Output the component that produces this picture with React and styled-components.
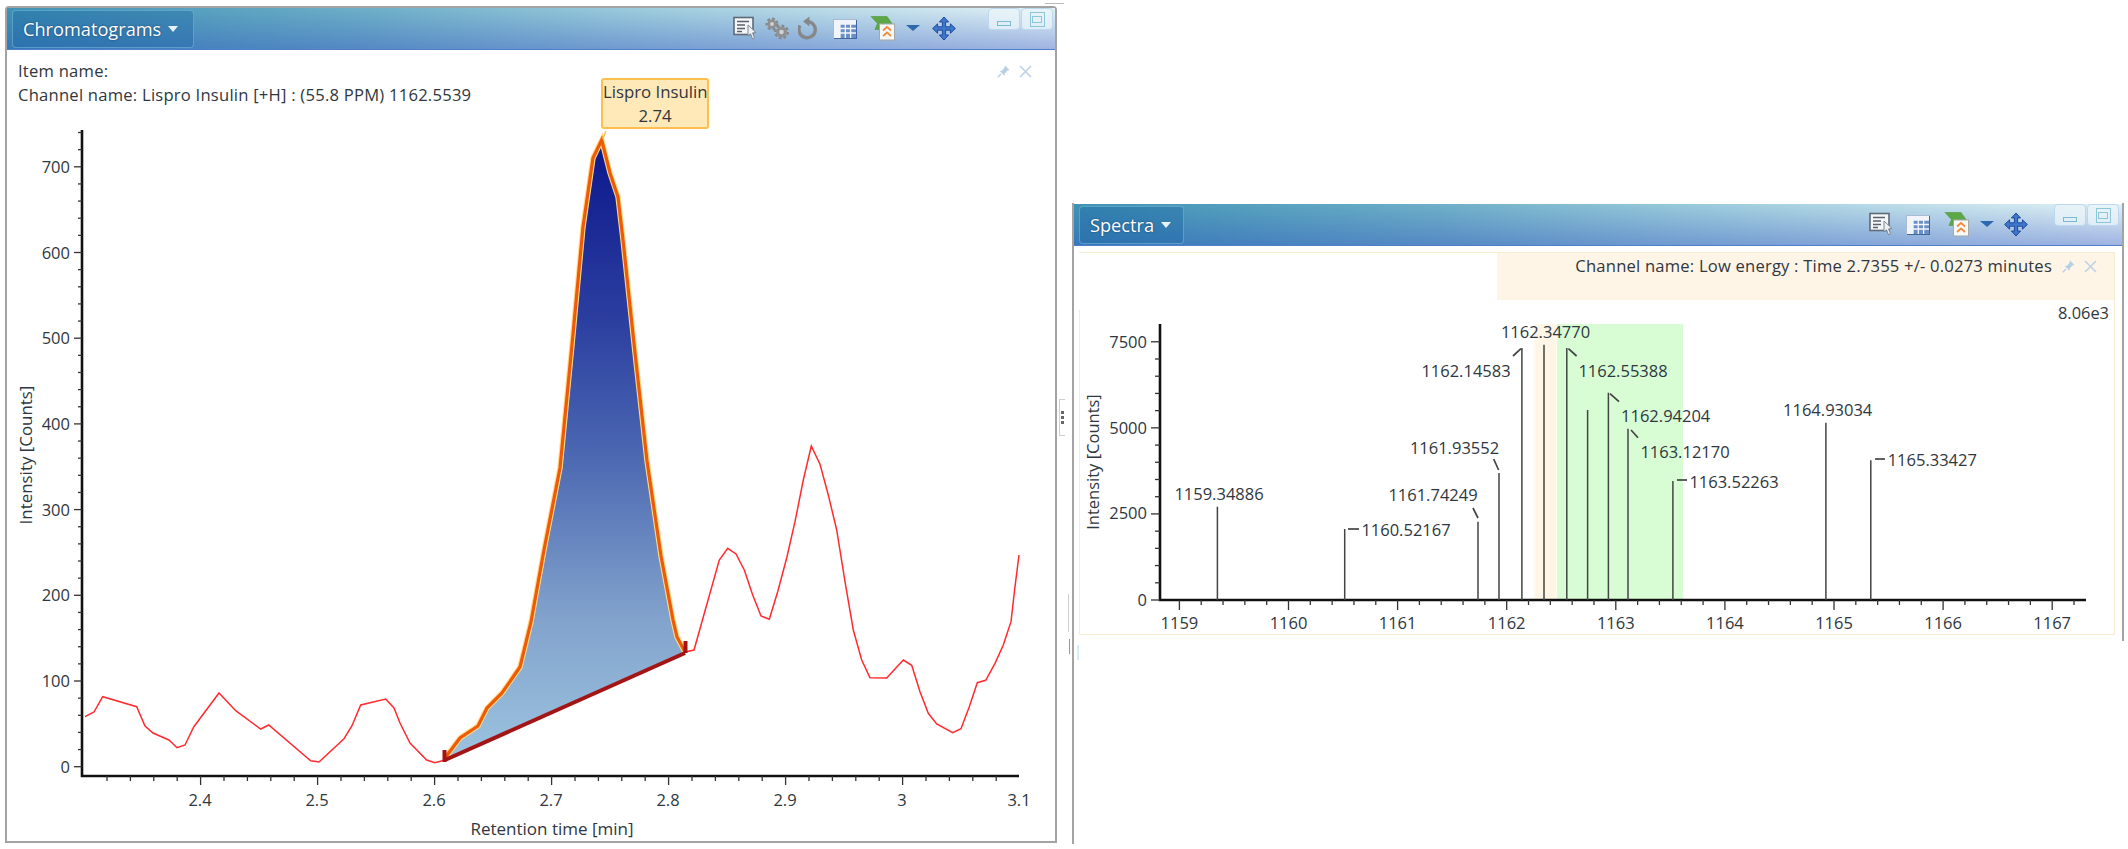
import React from "react";
import styled, { createGlobalStyle } from "styled-components";

const Global = createGlobalStyle`
  html, body { margin: 0; padding: 0; background: #fff; }
  body { font-family: "Open Sans", "Noto Sans", sans-serif; color: #2f3740; }
`;

const Desktop = styled.div`
  display: flex;
  align-items: flex-start;
  width: 2128px;
  height: 849px;
  padding: 6px 0 0 5px;
  box-sizing: border-box;
  overflow: hidden;
  background: #fff;
`;

const ChromWindow = styled.section`
  flex: none;
  width: 1052px;
  height: 837px;
  box-sizing: border-box;
  border: 2px solid #a3a3a3;
  border-radius: 4px 4px 0 0;
  display: flex;
  flex-direction: column;
`;

const Gutter = styled.div`
  flex: none;
  width: 15px;
  height: 843px;
  display: flex;
  flex-direction: column;
  align-items: flex-start;
`;

const TopRule = styled.div`
  width: 19px;
  height: 1px;
  margin: -3px 0 0 -12px;
  background: #bbb;
`;

const Handle = styled.div`
  margin: 395px 0 0 2px;
  width: 6px;
  height: 37px;
  box-sizing: border-box;
  border: 1px solid #cfcfcf;
  border-right: 0;
  display: flex;
  flex-direction: column;
  align-items: center;
  justify-content: center;
  gap: 2px;
  i { width: 3px; height: 3px; background: #666; display: block; }
`;

const SecondHandle = styled.div`
  margin: 158px 0 0 10px;
  width: 2px;
  height: 38px;
  box-sizing: border-box;
  border-right: 1px solid #cfcfcf;
`;

const GutterStub = styled.div`
  margin: 7px 0 0 12px;
  width: 1px;
  height: 15px;
  background: #999;
`;

const SpectraColumn = styled.div`
  flex: none;
  margin-top: 197px;
  width: 1052px;
  height: 641px;
  box-sizing: border-box;
  border-left: 2px solid #a3a3a3;
  display: flex;
  flex-direction: column;
  align-items: flex-start;
`;

const SpectraPane = styled.section`
  width: 1050px;
  height: 438px;
  box-sizing: border-box;
  padding-top: 1px;
  border-right: 2px solid #a3a3a3;
  display: flex;
  flex-direction: column;
`;

const PaneStub = styled.div`
  margin: 4px 0 0 3px;
  width: 2px;
  height: 15px;
  background: #d6ecfa;
`;

const Header = styled.header`
  flex: none;
  height: 42px;
  box-sizing: border-box;
  display: flex;
  align-items: center;
  border-bottom: 1px solid #4f7fca;
  background:
    linear-gradient(180deg, rgba(255,255,255,0) 0%, rgba(40,70,190,.36) 100%),
    linear-gradient(90deg, #3f94b4 0%, #6fb0c8 35%, #9cccdc 60%, #e2f2f6 100%);
`;

const TitleButton = styled.div`
  flex: none;
  width: ${(p) => p.$w}px;
  height: 38px;
  margin-left: ${(p) => p.$left}px;
  box-sizing: border-box;
  display: flex;
  align-items: center;
  gap: 7px;
  padding-left: 10px;
  border: 1px solid rgba(125,190,220,.55);
  border-radius: 4px;
  background: rgba(30,105,165,.42);
  color: #fff;
  font-size: 18.2px;
  text-shadow: 0 0 2px rgba(0,30,70,.6);
`;

const Caret = styled.span`
  width: 0;
  height: 0;
  border-left: ${(p) => p.$half || 5}px solid transparent;
  border-right: ${(p) => p.$half || 5}px solid transparent;
  border-top: 6px solid ${(p) => p.$color || "#e8f2fa"};
`;

const Toolbar = styled.div`
  margin-left: auto;
  display: flex;
  align-items: center;
  height: 100%;
`;

const Tool = styled.span`
  display: flex;
  flex: none;
  margin-left: ${(p) => p.$gap || 0}px;
  margin-top: ${(p) => p.$dy || 0}px;
`;

const WinButtons = styled.div`
  display: flex;
  align-self: flex-start;
  gap: 1px;
  margin-left: ${(p) => p.$gap}px;
  margin-right: ${(p) => p.$right}px;
`;

const WinButton = styled.button`
  width: 32px;
  height: 22px;
  padding: 0;
  box-sizing: border-box;
  border: 1.5px solid #bcd8ef;
  border-radius: 4px;
  background: rgba(236,246,250,.75);
  display: flex;
  align-items: center;
  justify-content: center;
`;

const MinGlyph = styled.span`
  width: 14px;
  height: 5px;
  margin-top: 9px;
  box-sizing: border-box;
  border: 1.5px solid #79bcd2;
`;

const MaxGlyph = styled.span`
  width: 15px;
  height: 15px;
  box-sizing: border-box;
  border: 1.5px solid #8cc6d8;
  display: flex;
  align-items: center;
  justify-content: center;
  &::after {
    content: "";
    width: 8px;
    height: 5px;
    border: 1.5px solid #8cc6d8;
  }
`;

const ChromBody = styled.div`
  flex: 1;
  position: relative;
  display: flex;
  flex-direction: column;
`;

const InfoBar = styled.div`
  flex: none;
  height: 58px;
  box-sizing: border-box;
  padding: 9px 23px 0 11px;
  display: flex;
  justify-content: space-between;
  align-items: flex-start;
`;

const InfoText = styled.div`
  font-size: 16.6px;
  line-height: 24px;
  letter-spacing: 0.23px;
  white-space: nowrap;
`;

const PinGroup = styled.div`
  flex: none;
  display: flex;
  align-items: center;
  gap: 9px;
  height: 24px;
`;

const Callout = styled.div`
  position: absolute;
  left: 594px;
  top: 28px;
  width: 108px;
  height: 51px;
  box-sizing: border-box;
  border: 2px solid #fdc04e;
  border-radius: 3px;
  background: #ffe9b9;
  font-size: 16.8px;
  line-height: 24px;
  text-align: center;
  white-space: nowrap;
`;

const PlotSvg = styled.svg`
  display: block;
  flex: none;
  overflow: visible;
  font-family: "Open Sans", "Noto Sans", sans-serif;
  font-size: 16.5px;
  fill: #2f3740;
`;

const SpectraFrame = styled.div`
  flex: none;
  height: 383px;
  margin: 6px 6px 0 5px;
  width: 1036px;
  box-sizing: border-box;
  border: solid #f6ecd0;
  border-width: 1px 1px 1px 0;
  display: flex;
  flex-direction: column;
`;

const InfoStrip = styled.div`
  flex: none;
  height: 47px;
  width: 617px;
  margin-left: auto;
  box-sizing: border-box;
  background: #fef5e7;
  display: flex;
  align-items: flex-start;
  justify-content: flex-end;
  padding: 1px 17px 0 0;
  font-size: 16.6px;
  line-height: 24px;
  letter-spacing: 0.2px;
  white-space: nowrap;
`;

const StripLabel = styled.span`
  margin-right: 10px;
`;

const PlotPanel = styled.div`
  flex: 1;
  background: linear-gradient(#f6ecd0, #f6ecd0) left 10px / 1px 100% no-repeat;
  display: flex;
  flex-direction: column;
`;

const ScaleRow = styled.div`
  flex: none;
  height: 24px;
  text-align: right;
  padding-right: 5px;
  font-size: 16.4px;
  line-height: 26px;
`;

/* ---- icons ---- */
const ReportIcon = () => (
  <svg width="25" height="25" viewBox="0 0 25 25">
    <rect x="1" y="1.5" width="19" height="17" fill="#f4f6f8" stroke="#5f6a78" strokeWidth="1.6" />
    <path d="M4 5.5h12M4 9h8M4 12.5h8M4 15.5h5" stroke="#59636f" strokeWidth="1.4" />
    <path d="M15 9l8 7.5-3.4.4 1.9 5-2 .9-2-5-2.5 2.2z" fill="#eef1f4" stroke="#7f8892" strokeWidth="1" />
  </svg>
);

const GearShape = ({ cx, cy, r }) => (
  <g>
    <circle cx={cx} cy={cy} r={r} fill="none" stroke="#88898b" strokeWidth="3" strokeDasharray="2.6 2" />
    <circle cx={cx} cy={cy} r={r - 0.5} fill="#8f9092" />
    <circle cx={cx} cy={cy} r={r * 0.38} fill="#cfd2d6" />
  </g>
);

const GearsIcon = () => (
  <svg width="24" height="23" viewBox="0 0 24 23">
    <GearShape cx={7} cy={7} r={5} />
    <GearShape cx={16.5} cy={15} r={6} />
  </svg>
);

const RefreshIcon = () => (
  <svg width="23" height="25" viewBox="0 0 23 25">
    <path d="M8 5.5a8.2 8.2 0 1 1-6 4" fill="none" stroke="#85888b" strokeWidth="3.4" />
    <path d="M11.5 0.5v10L5 5.5z" fill="#85888b" />
  </svg>
);

const TableIcon = () => (
  <svg width="24" height="20" viewBox="0 0 24 20">
    <rect x="0.5" y="0.5" width="23" height="19" fill="#f1f5fb" stroke="#a9bbd4" />
    <rect x="7" y="5" width="16" height="14" fill="#6a8fc6" />
    <path d="M1 5h22M1 9.5h22M1 14h22M7 5v14M12.3 5v14M17.6 5v14" stroke="#f2f6fb" strokeWidth="1.3" />
    <path d="M1 19.5h23M23.5 1v19" stroke="#41659e" />
  </svg>
);

const ExportIcon = () => (
  <svg width="26" height="25" viewBox="0 0 26 25">
    <path d="M1 0.5h16l5 7H9v6H5L7.5 7.5z" fill="#5da846" stroke="#4e9a3c" strokeWidth=".6" />
    <rect x="9.5" y="8" width="15" height="16" fill="#f8f8f6" stroke="#a5a8a6" />
    <path d="M13 14.5l4-3.5 4 3.5M13 20l4-3.5 4 3.5" fill="none" stroke="#f4893a" strokeWidth="1.7" />
  </svg>
);

const MoveIcon = () => (
  <svg width="24" height="25" viewBox="0 0 24 25">
    <path d="M12 1l4.6 5h-3v4.8h4.8v-3L23.4 12.5l-5 4.7v-3h-4.8v4.8h3L12 24l-4.6-5h3v-4.8H5.6v3L.6 12.5l5-4.7v3h4.8V6h-3z"
      fill="#3f77c8" stroke="#1d4aa0" strokeWidth="1" />
  </svg>
);

const PinIcon = () => (
  <svg width="13" height="13" viewBox="0 0 13 13">
    <path d="M8 .5l4.5 4.5-2 .6-2.8 2.8-.2 2.4L2.6 6l2.4-.2 2.4-3z" fill="#b6cfe6" />
    <path d="M4 9L.8 12.2" stroke="#b6cfe6" strokeWidth="1.3" />
  </svg>
);

const CloseIcon = () => (
  <svg width="13" height="13" viewBox="0 0 13 13">
    <path d="M1 1l11 11M12 1L1 12" stroke="#bcd2e6" strokeWidth="1.6" />
  </svg>
);

const Tools = ({ long }) => (
  <Toolbar>
    <Tool><ReportIcon /></Tool>
    {long && <Tool $gap={7}><GearsIcon /></Tool>}
    {long && <Tool $gap={9}><RefreshIcon /></Tool>}
    <Tool $gap={12}><TableIcon /></Tool>
    <Tool $gap={long ? 13 : 14}><ExportIcon /></Tool>
    <Tool $gap={10} $dy={-2}><Caret $half={7} $color="#2f69ad" /></Tool>
    <Tool $gap={long ? 12 : 10}><MoveIcon /></Tool>
    <WinButtons $gap={long ? 32 : 26} $right={long ? 2 : 3}>
      <WinButton aria-label="minimize"><MinGlyph /></WinButton>
      <WinButton aria-label="maximize"><MaxGlyph /></WinButton>
    </WinButtons>
  </Toolbar>
);

/* ---- chromatogram ---- */
const redA = [[85,716.7],[94,712],[102.7,696.7],[136.7,706.7],[145,726],[153,733],[169,740],[177,747.7],[185,745],[193.7,727],[219,693],[235.7,710.7],[260.7,729],[268.7,725],[310.7,760.7],[319,762],[344,738.7],[352,725.7],[360.7,705],[385.7,699],[394,708],[400,723],[410,743],[426.7,760],[435,762.7],[445,760]];
const redB = [[685,652],[694,650],[719.3,560],[727.7,548.3],[736,554],[744.3,570],[752.7,595],[761,616],[769.3,619.3],[777.7,591.7],[786.7,558],[795,521.7],[803.3,480],[811.3,446],[820,464.3],[828.3,495],[836.7,530],[845,581.7],[853.3,630],[861.7,660],[870,677.7],[886.7,678],[903.3,660],[911.7,665.3],[920,691.7],[928.3,713.3],[936.7,724],[952.7,732.7],[961,728.7],[969.3,706.7],[977.3,682.7],[985.7,680.3],[995,663.3],[1003.3,645],[1011,621.7],[1015,586.7],[1019,555]];
const peak = [[445,758],[460,738],[478,726],[487,708],[502,693],[520,667],[531,622],[544,550],[560,468],[572,345],[583,227],[593,158],[601.7,140],[610,173],[618,197],[623,240],[635,353],[647,461],[661,556],[673,620],[677,637],[685,652]];
const pts = (a) => a.map((p) => p.join(",")).join(" ");

const range = (n) => Array.from({ length: n }, (_, i) => i);

const ChromPlot = () => {
  const y0 = 766.7, xu = 1170, yu = 0.857;
  const toX = (v) => 200 + (v - 2.4) * xu;
  return (
    <PlotSvg width="1048" height="733" viewBox="7 108 1048 733">
      <defs>
        <linearGradient id="peakFill" gradientUnits="userSpaceOnUse" x1="0" y1="140" x2="0" y2="760">
          <stop offset="0" stopColor="#0c178c" />
          <stop offset="0.28" stopColor="#2a3d9f" />
          <stop offset="0.5" stopColor="#4a66b1" />
          <stop offset="0.78" stopColor="#83a4cd" />
          <stop offset="1" stopColor="#9cc3df" />
        </linearGradient>
      </defs>
      <path d="M82 130V776H1019" fill="none" stroke="#111" strokeWidth="2.6" />
      {range(40).map((i) => {
        const y = y0 - i * 20 * yu;
        if (y < 132) return null;
        const major = i % 5 === 0;
        return <line key={i} x1={major ? 74 : 78} x2="82" y1={y} y2={y} stroke="#333" strokeWidth="1.3" />;
      })}
      {range(40).map((i) => {
        const x = 107 + i * 23.4;
        if (x > 1019) return null;
        const major = (i - 4) % 5 === 0;
        return <line key={i} x1={x} x2={x} y1="776" y2={major ? 785 : 781} stroke="#333" strokeWidth="1.3" />;
      })}
      {[0, 100, 200, 300, 400, 500, 600, 700].map((v) => (
        <text key={v} x="70" y={y0 - v * yu + 6} textAnchor="end">{v}</text>
      ))}
      {["2.4", "2.5", "2.6", "2.7", "2.8", "2.9", "3", "3.1"].map((v) => (
        <text key={v} x={toX(parseFloat(v))} y="806" textAnchor="middle">{v}</text>
      ))}
      <text x="552" y="835" textAnchor="middle" fontSize="17">Retention time [min]</text>
      <text transform="translate(32 455) rotate(-90)" textAnchor="middle" fontSize="16.9">Intensity [Counts]</text>
      <polyline points={pts(redA)} fill="none" stroke="#ff2b30" strokeWidth="1.5" />
      <polyline points={pts(redB)} fill="none" stroke="#ff2b30" strokeWidth="1.5" />
      <polygon points={pts(peak)} fill="url(#peakFill)" />
      <polyline points={pts(peak)} fill="none" stroke="#ffd98a" strokeWidth="5.4" />
      <polyline points={pts(peak)} fill="none" stroke="#ef5a06" strokeWidth="3.2" />
      <path d="M445 760L685 653" stroke="#a31414" strokeWidth="4" />
      <path d="M444.5 750V762M685.5 641V653" stroke="#a31414" strokeWidth="4" />
      <path d="M606 131L602.7 139" stroke="#fdc04e" strokeWidth="1.5" />
    </PlotSvg>
  );
};

/* ---- spectrum ---- */
const sticks = [[1218.4,505.7],[1345.7,528],[1479,520.7],[1500,472],[1522.9,347],[1545,343.7],[1567.8,347],[1588.6,409],[1609.4,391.7],[1629,427.7],[1673.9,480],[1826.9,421.7],[1871.8,459.3]];
const peakLabels = [
  ["1159.34886", 1220, 499], ["1160.52167", 1407, 535], ["1161.74249", 1434, 500],
  ["1161.93552", 1455.5, 452.7], ["1162.14583", 1467, 376], ["1162.34770", 1546.5, 336.7],
  ["1162.55388", 1624, 376], ["1162.94204", 1666.7, 421], ["1163.12170", 1686, 456.7],
  ["1163.52263", 1735, 487], ["1164.93034", 1828.7, 415], ["1165.33427", 1933.3, 465],
];
const connectors = [
  "M1349 528H1360", "M1474 507L1479 517", "M1494.7 458L1499.6 469", "M1514 355L1522 347.7",
  "M1569.4 347.7L1577.6 355", "M1611 392.7L1620 400.7", "M1632 429L1639 436.7",
  "M1678 479H1688", "M1876 458H1886",
];

const SpectrumPlot = () => {
  const yAt = (v) => 599 - v * 0.03443;
  return (
    <PlotSvg width="1036" height="311" viewBox="1080 323 1036 311">
      <rect x="1535.5" y="323" width="22" height="276" fill="#fff6e6" />
      <rect x="1558" y="323" width="126" height="276" fill="#d8fdd5" />
      <path d="M1161 323V599H2087" fill="none" stroke="#111" strokeWidth="2.6" />
      {range(16).map((i) => {
        const v = i * 500;
        const major = i % 5 === 0;
        return <line key={i} x1={major ? 1152 : 1156} x2="1161" y1={yAt(v)} y2={yAt(v)} stroke="#333" strokeWidth="1.3" />;
      })}
      {range(45).map((i) => {
        const x = 1180.4 + i * 21.82;
        if (x > 2086) return null;
        const major = i % 5 === 0;
        return <line key={i} x1={x} x2={x} y1="599" y2={major ? 609 : 604} stroke="#333" strokeWidth="1.3" />;
      })}
      {sticks.map(([x, y]) => (
        <line key={x} x1={x} x2={x} y1={y} y2="599" stroke="#444" strokeWidth="1.5" />
      ))}
      {connectors.map((d) => <path key={d} d={d} stroke="#444" strokeWidth="1.7" />)}
      {peakLabels.map(([t, x, y]) => <text key={t} x={x} y={y} textAnchor="middle">{t}</text>)}
      {[[0, 605], [2500, 518], [5000, 432.7], [7500, 346.7]].map(([v, y]) => (
        <text key={v} x="1148" y={y} textAnchor="end">{v}</text>
      ))}
      {[1159, 1160, 1161, 1162, 1163, 1164, 1165, 1166, 1167].map((v, i) => (
        <text key={v} x={1180.4 + i * 109.1} y="628" textAnchor="middle">{v}</text>
      ))}
      <text transform="translate(1100 461) rotate(-90)" textAnchor="middle">Intensity [Counts]</text>
    </PlotSvg>
  );
};

export default function App() {
  return (
    <>
      <Global />
      <Desktop>
        <ChromWindow>
          <Header>
            <TitleButton $w={182} $left={5}>Chromatograms <Caret /></TitleButton>
            <Tools long />
          </Header>
          <ChromBody>
            <InfoBar>
              <InfoText>
                Item name:<br />
                Channel name: Lispro Insulin [+H] : (55.8 PPM) 1162.5539
              </InfoText>
              <PinGroup><PinIcon /><CloseIcon /></PinGroup>
            </InfoBar>
            <ChromPlot />
            <Callout>Lispro Insulin<br />2.74</Callout>
          </ChromBody>
        </ChromWindow>
        <Gutter>
          <TopRule />
          <Handle><i /><i /><i /></Handle>
          <SecondHandle />
          <GutterStub />
        </Gutter>
        <SpectraColumn>
          <SpectraPane>
            <Header>
              <TitleButton $w={105} $left={5}>Spectra <Caret /></TitleButton>
              <Tools />
            </Header>
            <SpectraFrame>
              <InfoStrip>
                <StripLabel>Channel name: Low energy : Time 2.7355 +/- 0.0273 minutes</StripLabel>
                <PinGroup><PinIcon /><CloseIcon /></PinGroup>
              </InfoStrip>
              <PlotPanel>
                <ScaleRow>8.06e3</ScaleRow>
                <SpectrumPlot />
              </PlotPanel>
            </SpectraFrame>
          </SpectraPane>
          <PaneStub />
        </SpectraColumn>
      </Desktop>
    </>
  );
}
